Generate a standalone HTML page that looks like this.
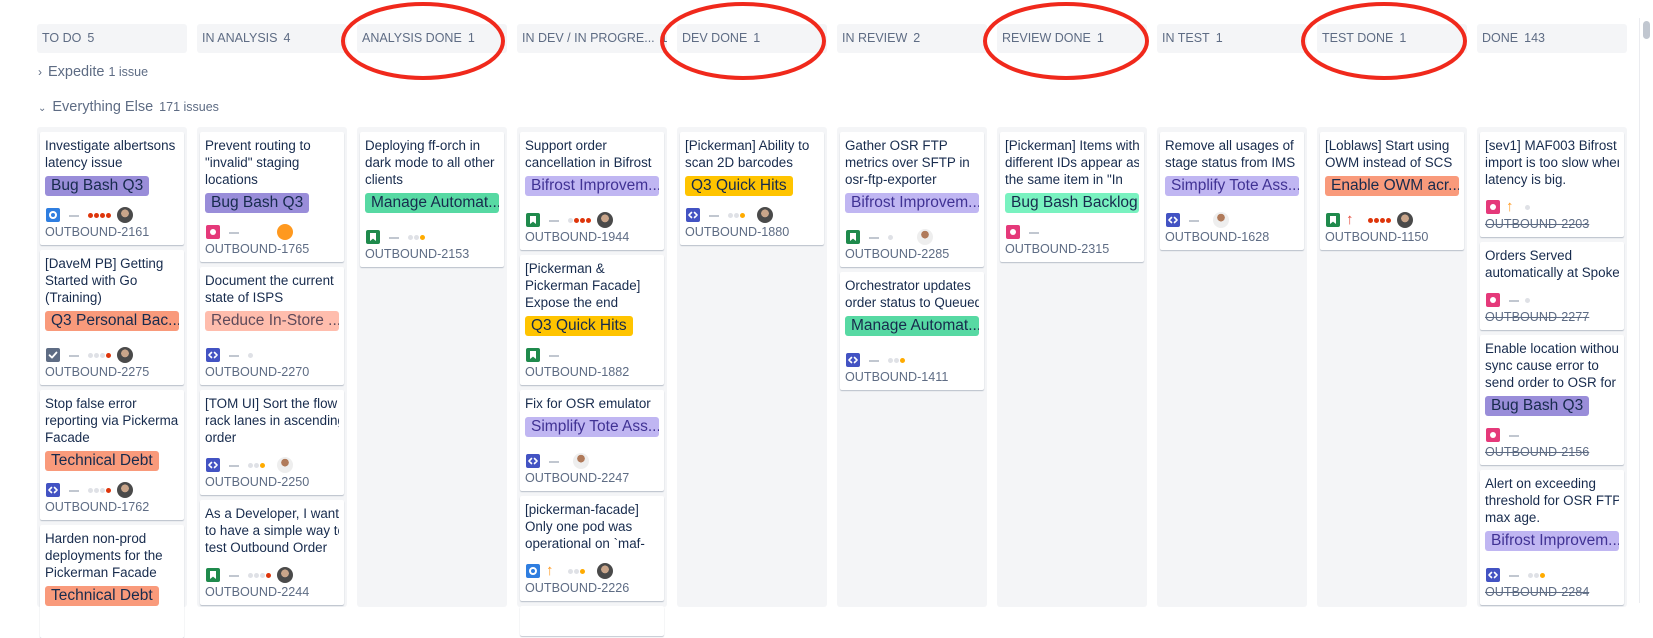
<!DOCTYPE html>
<html><head><meta charset="utf-8">
<style>
*{box-sizing:border-box;margin:0;padding:0}
body{width:1653px;height:603px;overflow:hidden;background:#fff;font-family:"Liberation Sans",sans-serif;color:#172b4d;position:relative}
.hdr{position:absolute;top:24px;height:29px;width:150px;background:#f4f5f7;border-radius:3px;font-size:12.5px;color:#5e6c84;line-height:29px;padding-left:5px;white-space:nowrap;overflow:hidden}
.hdr b{font-weight:normal;margin-left:6px}
.col{position:absolute;top:127px;width:150px;height:480px;background:#f4f5f7;border-radius:3px;padding:5px 3px}
.card{background:#fff;border-radius:2px;box-shadow:0 1px 1px rgba(9,30,66,.25);padding:5px 5px 4px;margin-bottom:5px;width:144px}
.ti{font-size:13.4px;line-height:17px;white-space:nowrap;overflow:hidden}
.lb{margin-top:5px;height:20px;line-height:20px;font-size:15.5px;padding:0 6px;border-radius:3px;display:inline-block;white-space:nowrap;max-width:134px}
.lb.f{width:134px;overflow:hidden}
.row{margin-top:11px;height:17px;position:relative}
.key{font-size:12.6px;line-height:17px;color:#5e6c84}
.key.s{text-decoration:line-through}
.ic{position:absolute;left:1px;top:1px;width:14px;height:14px;border-radius:2px}
.task{background:#2f7ee0}.task:after{content:"";position:absolute;left:3px;top:3px;width:8px;height:8px;border:2px solid #fff;border-radius:50%;box-sizing:border-box}
.story{background:#1f8a4c}.story:after{content:"";position:absolute;left:4px;top:3px;width:6px;height:8px;background:#fff;clip-path:polygon(0 0,100% 0,100% 100%,50% 70%,0 100%)}
.sub{background:#4353c3}
.sub svg,.chk svg{position:absolute;left:0;top:0}
.bug{background:#e5397a}.bug:after{content:"";position:absolute;left:4px;top:4px;width:6px;height:6px;background:#fff;border-radius:50%}
.chk{background:#5e6c84}
.dash{position:absolute;left:24px;top:8px;width:10px;height:2px;background:#c1c7d0}
.up{position:absolute;left:21px;top:0;font-size:15px;line-height:16px;font-weight:bold}
.dots{position:absolute;left:43px;top:6px;height:5px;display:flex;gap:1px}
.dots i{width:5px;height:5px;border-radius:50%;background:#dfe1e6;display:block}
.dots i.r{background:#de350b}.dots i.y{background:#ffab00}
.av{position:absolute;left:72px;top:0;width:16px;height:16px;border-radius:50%;background:radial-gradient(circle at 50% 40%,#c9a58a 0 30%,#4a4a4a 32%)}
.av.o{background:#ff991f}
.av.w{background:radial-gradient(circle at 50% 35%,#b07a5a 0 28%,#eee 30%)}
</style></head><body>

<svg width="0" height="0" style="position:absolute"><defs>
<symbol id="sb" viewBox="0 0 14 14"><path d="M5.5 4.5 L3 7 L5.5 9.5 M8.5 4.5 L11 7 L8.5 9.5" fill="none" stroke="#fff" stroke-width="1.6" stroke-linecap="round" stroke-linejoin="round"/></symbol>
<symbol id="ck" viewBox="0 0 14 14"><path d="M3.5 7.2 L6 9.6 L10.5 4.5" fill="none" stroke="#fff" stroke-width="1.8" stroke-linecap="round" stroke-linejoin="round"/></symbol>
</defs></svg>

<div class="hdr" style="left:37px">TO DO<b>5</b></div>
<div class="hdr" style="left:197px">IN ANALYSIS<b>4</b></div>
<div class="hdr" style="left:357px">ANALYSIS DONE<b>1</b></div>
<div class="hdr" style="left:517px">IN DEV / IN PROGRE...<b>13</b></div>
<div class="hdr" style="left:677px">DEV DONE<b>1</b></div>
<div class="hdr" style="left:837px">IN REVIEW<b>2</b></div>
<div class="hdr" style="left:997px">REVIEW DONE<b>1</b></div>
<div class="hdr" style="left:1157px">IN TEST<b>1</b></div>
<div class="hdr" style="left:1317px">TEST DONE<b>1</b></div>
<div class="hdr" style="left:1477px">DONE<b>143</b></div>

<div style="position:absolute;left:38px;top:63px;font-size:14.5px;color:#5e6c84;line-height:18px"><span style="font-size:12px;margin-right:6px">›</span>Expedite <span style="font-size:12.5px">1 issue</span></div>
<div style="position:absolute;left:38px;top:98px;font-size:14.5px;color:#5e6c84;line-height:18px"><span style="font-size:10px;margin-right:6px">⌄</span>Everything Else <span style="font-size:12.5px;margin-left:2px">171 issues</span></div>

<div class="col" style="left:37px">
 <div class="card"><div class="ti">Investigate albertsons<br>latency issue</div><div class="lb" style="background:#998dd9">Bug Bash Q3</div><div class="row"><span class="ic task"></span><span class="dash"></span><span class="dots"><i class="r"></i><i class="r"></i><i class="r"></i><i class="r"></i></span><span class="av"></span></div><div class="key">OUTBOUND-2161</div></div>
 <div class="card"><div class="ti">[DaveM PB] Getting<br>Started with Go<br>(Training)</div><div class="lb f" style="background:#f99a7b">Q3 Personal Bac...</div><div class="row"><span class="ic chk"><svg width="14" height="14"><use href="#ck"/></svg></span><span class="dash"></span><span class="dots"><i></i><i></i><i></i><i class="r"></i></span><span class="av"></span></div><div class="key">OUTBOUND-2275</div></div>
 <div class="card"><div class="ti">Stop false error<br>reporting via Pickerman<br>Facade</div><div class="lb" style="background:#f99a7b">Technical Debt</div><div class="row"><span class="ic sub"><svg width="14" height="14"><use href="#sb"/></svg></span><span class="dash"></span><span class="dots"><i></i><i></i><i></i><i class="r"></i></span><span class="av"></span></div><div class="key">OUTBOUND-1762</div></div>
 <div class="card"><div class="ti">Harden non-prod<br>deployments for the<br>Pickerman Facade</div><div class="lb" style="background:#f99a7b">Technical Debt</div><div class="row"></div></div>
</div>

<div class="col" style="left:197px">
 <div class="card"><div class="ti">Prevent routing to<br>"invalid" staging<br>locations</div><div class="lb" style="background:#998dd9">Bug Bash Q3</div><div class="row"><span class="ic bug"></span><span class="dash"></span><span class="av o"></span></div><div class="key">OUTBOUND-1765</div></div>
 <div class="card"><div class="ti">Document the current<br>state of ISPS</div><div class="lb f" style="background:#ffbdad;color:#5e4a5a">Reduce In-Store ...</div><div class="row"><span class="ic sub"><svg width="14" height="14"><use href="#sb"/></svg></span><span class="dash"></span><span class="dots"><i></i></span></div><div class="key">OUTBOUND-2270</div></div>
 <div class="card"><div class="ti">[TOM UI] Sort the flow<br>rack lanes in ascending<br>order</div><div class="row"><span class="ic sub"><svg width="14" height="14"><use href="#sb"/></svg></span><span class="dash"></span><span class="dots"><i></i><i></i><i class="y"></i></span><span class="av w"></span></div><div class="key">OUTBOUND-2250</div></div>
 <div class="card"><div class="ti">As a Developer, I want<br>to have a simple way to<br>test Outbound Order</div><div class="row"><span class="ic story"></span><span class="dash"></span><span class="dots"><i></i><i></i><i></i><i class="r"></i></span><span class="av"></span></div><div class="key">OUTBOUND-2244</div></div>
</div>

<div class="col" style="left:357px">
 <div class="card"><div class="ti">Deploying ff-orch in<br>dark mode to all other<br>clients</div><div class="lb f" style="background:#57d9a3">Manage Automat...</div><div class="row"><span class="ic story"></span><span class="dash"></span><span class="dots"><i></i><i></i><i class="y"></i></span></div><div class="key">OUTBOUND-2153</div></div>
</div>

<div class="col" style="left:517px">
 <div class="card"><div class="ti">Support order<br>cancellation in Bifrost</div><div class="lb f" style="background:#c0b6f2;color:#403294">Bifrost Improvem...</div><div class="row"><span class="ic story"></span><span class="dash"></span><span class="dots"><i></i><i class="r"></i><i class="r"></i><i class="r"></i></span><span class="av"></span></div><div class="key">OUTBOUND-1944</div></div>
 <div class="card"><div class="ti">[Pickerman &amp;<br>Pickerman Facade]<br>Expose the end</div><div class="lb" style="background:#ffc400">Q3 Quick Hits</div><div class="row"><span class="ic story"></span><span class="dash"></span></div><div class="key">OUTBOUND-1882</div></div>
 <div class="card"><div class="ti">Fix for OSR emulator</div><div class="lb f" style="background:#c0b6f2;color:#403294">Simplify Tote Ass...</div><div class="row"><span class="ic sub"><svg width="14" height="14"><use href="#sb"/></svg></span><span class="dash"></span><span class="av w" style="left:48px"></span></div><div class="key">OUTBOUND-2247</div></div>
 <div class="card"><div class="ti">[pickerman-facade]<br>Only one pod was<br>operational on `maf-</div><div class="row"><span class="ic task"></span><span class="up" style="color:#ff991f">↑</span><span class="dots"><i></i><i></i><i class="y"></i></span><span class="av"></span></div><div class="key">OUTBOUND-2226</div></div>
 <div class="card" style="height:30px"></div>
</div>

<div class="col" style="left:677px">
 <div class="card"><div class="ti">[Pickerman] Ability to<br>scan 2D barcodes</div><div class="lb" style="background:#ffc400">Q3 Quick Hits</div><div class="row"><span class="ic sub"><svg width="14" height="14"><use href="#sb"/></svg></span><span class="dash"></span><span class="dots"><i></i><i></i><i class="y"></i></span><span class="av"></span></div><div class="key">OUTBOUND-1880</div></div>
</div>

<div class="col" style="left:837px">
 <div class="card"><div class="ti">Gather OSR FTP<br>metrics over SFTP in<br>osr-ftp-exporter</div><div class="lb f" style="background:#c0b6f2;color:#403294">Bifrost Improvem...</div><div class="row"><span class="ic story"></span><span class="dash"></span><span class="dots"><i></i></span><span class="av w"></span></div><div class="key">OUTBOUND-2285</div></div>
 <div class="card"><div class="ti">Orchestrator updates<br>order status to Queued</div><div class="lb f" style="background:#57d9a3">Manage Automat...</div><div class="row"><span class="ic sub"><svg width="14" height="14"><use href="#sb"/></svg></span><span class="dash"></span><span class="dots"><i></i><i></i><i class="y"></i></span></div><div class="key">OUTBOUND-1411</div></div>
</div>

<div class="col" style="left:997px">
 <div class="card"><div class="ti">[Pickerman] Items with<br>different IDs appear as<br>the same item in "In</div><div class="lb" style="background:#79f2c0">Bug Bash Backlog</div><div class="row"><span class="ic bug"></span><span class="dash"></span></div><div class="key">OUTBOUND-2315</div></div>
</div>

<div class="col" style="left:1157px">
 <div class="card"><div class="ti">Remove all usages of<br>stage status from IMS</div><div class="lb f" style="background:#c0b6f2;color:#403294">Simplify Tote Ass...</div><div class="row"><span class="ic sub"><svg width="14" height="14"><use href="#sb"/></svg></span><span class="dash"></span><span class="av w" style="left:48px"></span></div><div class="key">OUTBOUND-1628</div></div>
</div>

<div class="col" style="left:1317px">
 <div class="card"><div class="ti">[Loblaws] Start using<br>OWM instead of SCS</div><div class="lb f" style="background:#f99a7b">Enable OWM acr...</div><div class="row"><span class="ic story"></span><span class="up" style="color:#e5493a">↑</span><span class="dots"><i class="r"></i><i class="r"></i><i class="r"></i><i class="r"></i></span><span class="av"></span></div><div class="key">OUTBOUND-1150</div></div>
</div>

<div class="col" style="left:1477px">
 <div class="card"><div class="ti">[sev1] MAF003 Bifrost<br>import is too slow when<br>latency is big.</div><div class="row"><span class="ic bug"></span><span class="up" style="color:#ff991f">↑</span><span class="dots" style="left:40px"><i></i></span></div><div class="key s">OUTBOUND-2203</div></div>
 <div class="card"><div class="ti">Orders Served<br>automatically at Spoke.</div><div class="row"><span class="ic bug"></span><span class="dash"></span><span class="dots" style="left:40px"><i></i></span></div><div class="key s">OUTBOUND-2277</div></div>
 <div class="card"><div class="ti">Enable location without<br>sync cause error to<br>send order to OSR for</div><div class="lb" style="background:#998dd9">Bug Bash Q3</div><div class="row"><span class="ic bug"></span><span class="dash"></span></div><div class="key s">OUTBOUND-2156</div></div>
 <div class="card"><div class="ti">Alert on exceeding<br>threshold for OSR FTP<br>max age.</div><div class="lb f" style="background:#c0b6f2;color:#403294">Bifrost Improvem...</div><div class="row"><span class="ic sub"><svg width="14" height="14"><use href="#sb"/></svg></span><span class="dash"></span><span class="dots"><i></i><i></i><i class="y"></i></span></div><div class="key s">OUTBOUND-2284</div></div>
</div>

<div style="position:absolute;left:1639px;top:18px;width:1px;height:585px;background:#ebecf0"></div>
<div style="position:absolute;left:1643px;top:21px;width:7px;height:18px;border-radius:4px;background:#c1c7d0"></div>

<svg style="position:absolute;left:0;top:0" width="1653" height="603">
 <g fill="none" stroke="#f0291c" stroke-width="4">
  <ellipse cx="423" cy="41" rx="80" ry="37"/>
  <ellipse cx="743" cy="41" rx="81" ry="37"/>
  <ellipse cx="1066" cy="41" rx="81" ry="37"/>
  <ellipse cx="1384" cy="41" rx="81" ry="37"/>
 </g>
</svg>
</body></html>
